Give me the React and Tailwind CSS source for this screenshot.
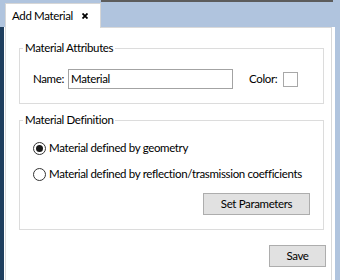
import React from 'react';

const Radio = ({ checked, label }) => (
  <div className="flex items-center h-[16px] gap-[3px]">
    <span className="shrink-0 w-[13px] h-[13px] rounded-full border border-[#333333] bg-white flex items-center justify-center">
      {checked && <span className="w-[7px] h-[7px] rounded-full bg-[#1a1a1a]" />}
    </span>
    <span className="leading-[16px] whitespace-nowrap">{label}</span>
  </div>
);

const Button = ({ children, width }) => (
  <div className={`${width} h-[22px] bg-[#e1e1e1] border border-[#adadad] flex items-center justify-center leading-[16px]`}>
    {children}
  </div>
);

export default function App() {
  return (
    <div className="flex w-[340px] h-[280px] bg-[#b0c4de] overflow-hidden text-[11.5px] tracking-[-0.35px] text-black font-['Lato',sans-serif]">
      {/* left edge */}
      <div className="flex flex-col w-[5px]">
        <div className="h-[27px] bg-[#b0c4de]" />
        <div className="flex-1 bg-[#1f3f5f] border-r border-white" />
      </div>

      {/* main column */}
      <div className="flex flex-col w-[330px]">
        <div className="flex items-end h-[27px]">
          <div className="relative z-10 -mb-px flex items-center w-[96px] h-[25px] bg-white border border-b-0 border-[#d6d6d6] pl-[6px]">
            <span className="leading-[16px]">Add Material</span>
            <svg className="ml-auto mr-[12px]" width="6" height="6" viewBox="0 0 6 6">
              <path d="M0.5 0.5 L5.5 5.5 M5.5 0.5 L0.5 5.5" stroke="#000" strokeWidth="1.8" />
            </svg>
          </div>
          <div className="flex-1 self-start h-[2px] bg-[#5c5c5c] mr-[2px]" />
        </div>

        <div className="flex-1 flex bg-white pr-[3px]">
          <div className="flex-1 border-l border-t border-r border-[#d9d9d9] pt-[12px] pl-[13px]">
            <fieldset className="w-[305px] min-w-0 border border-[#dcdcdc]">
              <legend className="ml-[3px] px-[2px] leading-[16px]">Material Attributes</legend>
              <div className="flex items-center h-[20px] mt-[13px] mb-[14px] pl-[13px]">
                <span className="w-[35px] leading-[16px]">Name:</span>
                <div className="w-[165px] h-[20px] border border-[#a3a3a3] pl-[2px] flex items-center leading-[16px]">
                  Material
                </div>
                <span className="ml-[16px] w-[34px] leading-[16px]">Color:</span>
                <div className="w-[15px] h-[15px] border border-[#a8a8a8] bg-white" />
              </div>
            </fieldset>

            <fieldset className="w-[305px] min-w-0 mt-[8px] border border-[#dcdcdc]">
              <legend className="ml-[3px] px-[2px] leading-[16px]">Material Definition</legend>
              <div className="flex flex-col pt-[12px] pb-[14px] pl-[13px] pr-[13px]">
                <Radio checked label="Material defined by geometry" />
                <div className="mt-[10px]">
                  <Radio label="Material defined by reflection/trasmission coefficients" />
                </div>
                <div className="flex justify-end mt-[11px]">
                  <Button width="w-[107px]">Set Parameters</Button>
                </div>
              </div>
            </fieldset>

            <div className="w-[307px] flex justify-end mt-[15px]">
              <Button width="w-[57px]">Save</Button>
            </div>
          </div>
        </div>
      </div>

      {/* right edge */}
      <div className="w-[5px] bg-[#b0c4de]" />
    </div>
  );
}
